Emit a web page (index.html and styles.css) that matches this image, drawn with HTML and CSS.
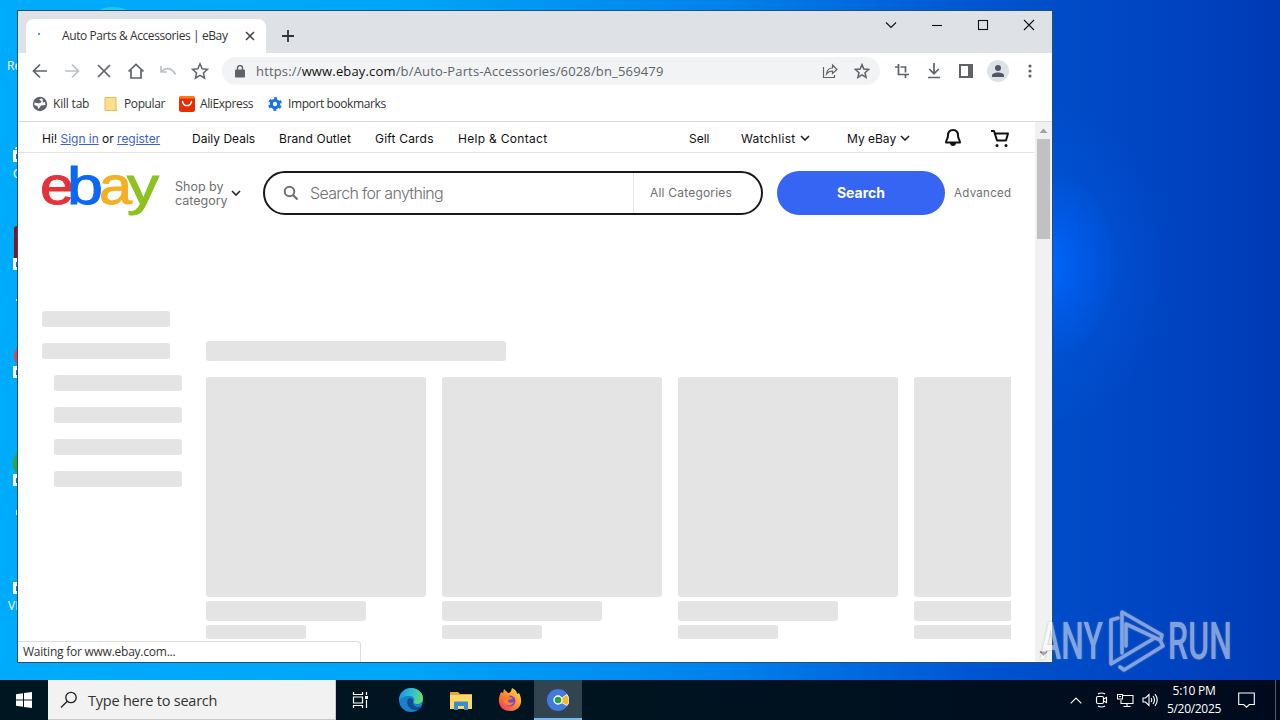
FILE: index.html
```html
<!DOCTYPE html>
<html lang="en">
<head>
  <meta charset="UTF-8" />
  <meta name="viewport" content="width=device-width, initial-scale=1.0" />
  <title>Auto Parts &amp; Accessories | eBay</title>
  <link rel="stylesheet" href="styles.css">
</head>
<body>
  <main class="desktop">
    <!-- desktop shortcuts, mostly hidden by the window -->
    <svg class="shortcuts" width="160" height="680">
      <ellipse cx="113" cy="14" rx="17" ry="7" fill="#26c6e8"/>
      <path d="M15 149h3v-2h-2z" fill="#fff"/>
      <rect x="14" y="226" width="8" height="36" rx="3" fill="#8c1219"/>
      <circle cx="25" cy="356" r="11" fill="#e6404c"/>
      <circle cx="28" cy="463" r="15" fill="#35a33c"/>
      <g fill="#fff">
        <rect x="13" y="150" width="6" height="12"/><rect x="13" y="258" width="6" height="12"/>
        <rect x="13" y="366" width="6" height="12"/><rect x="13" y="474" width="6" height="12"/>
        <rect x="13" y="582" width="6" height="12"/>
      </g>
      <g fill="#1673c4">
        <rect x="16" y="154" width="3" height="5"/><rect x="16" y="262" width="3" height="5"/>
        <rect x="16" y="370" width="3" height="5"/><rect x="16" y="478" width="3" height="5"/>
        <rect x="16" y="586" width="3" height="5"/>
        <rect x="16" y="299" width="2" height="2" fill="#cdefff"/><rect x="16" y="510" width="1" height="5" fill="#cdefff"/>
      </g>
      <g class="shortcut-label"><text x="7" y="70">Re</text><text x="13" y="178">C</text><text x="8" y="610">VL</text></g>
    </svg>

    <section class="window">
      <header class="tabstrip">
        <div class="tab">
          <span class="spinner"></span>
          <span class="tab-title">Auto Parts &amp; Accessories | eBay</span>
          <svg width="10" height="10" viewBox="0 0 10 10"><path d="M1 1l8 8M9 1L1 9" stroke="#444" stroke-width="1.6"/></svg>
        </div>
        <svg class="new-tab" width="12" height="12" viewBox="0 0 12 12"><path d="M6 0v12M0 6h12" stroke="#333" stroke-width="1.8"/></svg>
        <div class="controls">
          <svg width="12" height="12"><path d="M1 3.500l5 5 5-5" class="thin"/></svg>
          <svg width="12" height="12"><path d="M1 6.500h10" class="thin"/></svg>
          <svg width="12" height="12"><rect x="1.500" y="1.500" width="9" height="9" class="thin"/></svg>
          <svg width="12" height="12"><path d="M1 1l10 10M11 1L1 11" class="thin"/></svg>
        </div>
      </header>

      <div class="toolbar">
        <span class="tool"><svg width="16" height="16" class="line"><path d="M15 8H2M8 1.500L1.500 8 8 14.500"/></svg></span>
        <span class="tool off"><svg width="16" height="16" class="line"><path d="M1 8h13M8 1.500L14.500 8 8 14.500"/></svg></span>
        <span class="tool"><svg width="16" height="16" class="line"><path d="M2 2l12 12M14 2L2 14"/></svg></span>
        <span class="tool"><svg width="18" height="16" class="line"><path d="M1.500 8.500L9 1.500l7.500 7M4 7v8h10V7"/></svg></span>
        <span class="tool off"><svg width="18" height="16" class="line"><path d="M2 3v6h6M2.500 8.500c5-5 11-3 14 3"/></svg></span>
        <span class="tool"><svg width="18" height="18" viewBox="0 0 18 18" class="line fine-star"><path d="M9 1.800l2.100 5 5.400.5-4.100 3.600 1.200 5.300L9 13.400l-4.600 2.800 1.200-5.300L1.500 7.300l5.400-.5z"/></svg></span>
        <div class="omnibox">
          <svg width="10" height="13" viewBox="0 0 10 13"><rect y="4.500" width="10" height="8" rx="1" fill="#5f6368"/><path d="M2.500 5V3a2.500 2.500 0 015 0v2" fill="none" stroke="#5f6368" stroke-width="1.400"/></svg>
          <span class="url">https://<b>www.ebay.com</b>/b/Auto-Parts-Accessories/6028/bn_569479</span>
          <svg width="16" height="16" class="line fine"><path d="M1.500 4v10.500h11V12M4.500 11c.5-4 2.500-6 6-6V2l4.500 4.500-4.500 4V8c-3 0-4.500 1-6 3z"/></svg>
          <svg class="bm-star line" width="16" height="16" viewBox="0 0 18 18"><path d="M9 1.800l2.100 5 5.400.5-4.100 3.600 1.200 5.300L9 13.400l-4.600 2.800 1.200-5.300L1.500 7.300l5.400-.5z"/></svg>
        </div>
        <span class="tool"><svg width="14" height="14" class="line"><path d="M0 3h3.500M3.500 0v10.500H14M5.500 3h5v5.500M10.500 10v4"/></svg></span>
        <span class="tool"><svg width="14" height="16" class="line"><path d="M7 0v10.500M2.200 6L7 10.800 11.800 6M1 14.500h12"/></svg></span>
        <span class="tool"><svg width="14" height="14"><rect x="1" y="1" width="12" height="12" fill="none" stroke="#5f6368" stroke-width="2"/><path d="M9 0h5v14H9z" fill="#5f6368"/></svg></span>
        <span class="tool"><svg width="22" height="22"><circle cx="11" cy="11" r="11" fill="#dee1e6"/><circle cx="11" cy="8" r="3" fill="#50566a"/><path d="M5 17v-1.500c0-4 12-4 12 0V17z" fill="#50566a"/></svg></span>
        <span class="tool"><svg width="4" height="14" fill="#5f6368"><circle cx="2" cy="2" r="1.600"/><circle cx="2" cy="7" r="1.600"/><circle cx="2" cy="12" r="1.600"/></svg></span>
      </div>

      <div class="bookmarks">
        <span class="bookmark kill"><svg width="16" height="16"><circle cx="8" cy="8" r="7.200" fill="#5f6368"/><path d="M9 2.500c-2 .5-2 1.500-.5 2s1 2-.5 2.500-3 0-5.500-.5L2.300 9l3.200 1.300L6.500 13l1.500-2 1-1.500L13.500 9 13 6l-2 .5L10.500 3z" fill="#fff"/></svg>Kill tab</span>
        <span class="bookmark popular"><svg width="16" height="16"><path d="M2 1.500h11V12l1 2.500H2z" fill="#ffe08a" stroke="#e6bc55"/></svg>Popular</span>
        <span class="bookmark ali"><svg width="16" height="16"><rect width="16" height="16" rx="2.500" fill="#e62e04"/><path d="M0 2.500A2.500 2.500 0 012.500 0h11A2.500 2.500 0 0116 2.500z" fill="#ff7a1e"/><path d="M3.500 5.500c1 5.500 8 5.500 9 0" fill="none" stroke="#fff" stroke-width="1.400" stroke-linecap="round"/></svg>AliExpress</span>
        <span class="bookmark"><svg width="16" height="16"><circle cx="8" cy="8" r="3.700" fill="none" stroke="#1a73e8" stroke-width="3"/><circle cx="8" cy="8" r="5.800" fill="none" stroke="#1a73e8" stroke-width="2.200" stroke-dasharray="3 3.073" stroke-dashoffset="-1.500"/></svg>Import bookmarks</span>
      </div>

      <div class="viewport">
        <div class="page">
          <nav class="topnav">
            <span class="greet">Hi! <a href="#">Sign in</a> or <a href="#">register</a></span>
            <span class="deals">Daily Deals</span>
            <span class="brand">Brand Outlet</span>
            <span class="gift">Gift Cards</span>
            <span class="help">Help &amp; Contact</span>
            <span class="sell">Sell</span>
            <span class="watch">Watchlist <svg width="10" height="6" class="chev"><path d="M1 1l4 4 4-4"/></svg></span>
            <span class="my">My eBay <svg width="10" height="6" class="chev"><path d="M1 1l4 4 4-4"/></svg></span>
            <svg class="bell" width="18" height="20"><path d="M9 2C5.500 2 4 4.500 4 7.500c0 3.500-2 4.500-2 7h14c0-2.500-2-3.500-2-7C14 4.500 12.500 2 9 2z" fill="none" stroke="#111" stroke-width="2" stroke-linejoin="round"/><path d="M6 15c0 4 6 4 6 0z" fill="#111"/></svg>
            <svg width="20" height="19"><path d="M1 2h3l3 9.500h9L18 4.500H5" fill="none" stroke="#111" stroke-width="2" stroke-linejoin="round"/><circle cx="7" cy="16.500" r="1.500" fill="#111"/><circle cx="16" cy="16.500" r="1.500" fill="#111"/></svg>
          </nav>

          <div class="searchbar">
            <svg class="logo" width="120" height="54">
              <text x="-2" y="38" textLength="34" lengthAdjust="spacingAndGlyphs" fill="#e53238" stroke="#e53238">e</text>
              <text x="25" y="38" textLength="36" lengthAdjust="spacingAndGlyphs" fill="#0968f6" stroke="#0968f6">b</text>
              <text x="57" y="38" textLength="33" lengthAdjust="spacingAndGlyphs" fill="#f5af22" stroke="#f5af22">a</text>
              <text x="85" y="38" textLength="32" lengthAdjust="spacingAndGlyphs" fill="#8dc21f" stroke="#8dc21f">y</text>
            </svg>
            <span class="shop">Shop by<br>category</span>
            <svg width="10" height="6" class="chev shop-chev"><path d="M1 1l4 4 4-4"/></svg>
            <div class="search">
              <svg width="16" height="16"><circle cx="6.500" cy="6.500" r="4.800" fill="none" stroke="#707070" stroke-width="2"/><path d="M10 10l4.500 4.500" stroke="#707070" stroke-width="2.200"/></svg>
              <span class="placeholder">Search for anything</span>
              <span class="cats">All Categories</span>
            </div>
            <span class="go">Search</span>
            <span class="adv">Advanced</span>
          </div>

          <div class="skeleton">
            <div class="side">
              <i></i><i></i><i class="sub"></i><i class="sub"></i><i class="sub"></i><i class="sub"></i>
            </div>
            <div class="feed">
              <i class="heading"></i>
              <div class="cards">
                <div class="card"><i class="pic"></i><i class="name"></i><i class="price"></i></div>
                <div class="card"><i class="pic"></i><i class="name"></i><i class="price"></i></div>
                <div class="card"><i class="pic"></i><i class="name"></i><i class="price"></i></div>
                <div class="card"><i class="pic"></i><i class="name"></i><i class="price"></i></div>
              </div>
            </div>
          </div>
        </div>
        <div class="scrollbar">
          <svg width="17" height="17"><path d="M4.500 11l4-4.500 4 4.500z" fill="#a3a3a3"/></svg>
          <span class="thumb"></span>
          <svg class="down" width="17" height="17"><path d="M4.500 6.500l4 4.500 4-4.500z" fill="#505050"/></svg>
        </div>
      </div>
      <div class="status">Waiting for www.ebay.com...</div>
    </section>

    <svg class="watermark" width="240" height="70">
      <g fill="#fff" font-size="51.500">
        <text x="4" y="53" textLength="63" lengthAdjust="spacingAndGlyphs">ANY</text>
        <text x="132" y="53" textLength="64" lengthAdjust="spacingAndGlyphs">RUN</text>
      </g>
      <path d="M86 47V6L126 29 124.500 35M82 12L75 14V58L117 33M84 61L88 64 127 40 124 34 90 18V40" fill="none" stroke="#fff" stroke-width="3.600" stroke-linejoin="round" stroke-linecap="round"/>
    </svg>
  </main>

  <footer class="taskbar">
    <span class="start"><svg width="16" height="16" fill="#fff"><path d="M0 2.200L7 1.200v6.300H0zM8 1l8-1v7.500H8zM0 8.500h7v6.300l-7-1zM8 8.500h8V16l-8-1z"/></svg></span>
    <div class="tb-search">
      <svg width="18" height="18"><circle cx="11" cy="6.500" r="5.200" fill="none" stroke="#222" stroke-width="1.300"/><path d="M7.300 10.200L1 16.500" stroke="#222" stroke-width="1.300"/></svg>
      <span>Type here to search</span>
    </div>
    <span class="app"><svg width="18" height="16" fill="none" stroke="#fff" stroke-width="1.200"><path d="M1.500 0v2.500h9V0M1.500 16v-2.500h9V16M1.500 5h9v6h-9zM14.500 0v3M14.500 8v8"/><path d="M13 4h3v3h-3z" fill="#fff" stroke="none"/></svg></span>
    <span class="app edge"><svg width="24" height="24">
      <defs><linearGradient id="eg" x1="0" x2="1" y1=".3" y2=".5"><stop stop-color="#1695d8"/><stop offset=".5" stop-color="#31bdd5"/><stop offset="1" stop-color="#62de6c"/></linearGradient></defs>
      <circle cx="12" cy="12" r="12" fill="#1781ce"/>
      <path d="M0 11C1 4 6 0 12 0c7 0 12 5 12 10 0 4-3 6-6 6-3 0-4-1-3-3 1-3-1-5-5-5-5 0-9 2-10 5z" fill="url(#eg)"/>
      <path d="M9 11c-3 5 2 12 9 11 2 0 4-2 5-4-4 2-9 1-9-4 1-3-3-5-5-3z" fill="#134b91"/></svg></span>
    <span class="app"><svg width="22" height="19"><path d="M0 1h8l2 2h12v15H0z" fill="#e7a92f"/><path d="M0 4h22v14H0z" fill="#ffd76b"/><path d="M4 19v-7.500q0-1 1-1h12q1 0 1 1V19h-4v-4H8v4z" fill="#3a8ec9"/></svg></span>
    <span class="app"><svg width="24" height="24">
      <defs><linearGradient id="fg" x1="1" x2="0" y1="0" y2="1"><stop stop-color="#ffe63d"/><stop offset=".45" stop-color="#ff962d"/><stop offset="1" stop-color="#f3256c"/></linearGradient></defs>
      <path d="M3 4l2 1 1-4 4 4c2 0 3-1 4-5 4 2 5 4 5 6l2-1c5 9 1 18-9 18S-2 14 3 4z" fill="url(#fg)"/>
      <circle cx="12" cy="13" r="5.500" fill="#7a45d6"/><path d="M4 8c3-2 6-1 8 1l3 1c-1 2-5 1-5 3s4 2 6 1c-2 5-9 4-10 0z" fill="#ff8126"/></svg></span>
    <span class="app active"><svg width="22" height="22"><circle cx="11" cy="11" r="11" fill="#4479dd"/><path d="M12 8.500h3.500L20 5.500c2.500 4 2.500 8 0 11L15.500 14H12z" fill="#fbb624" stroke="#e8f0ff"/><circle cx="11" cy="11" r="4" fill="#25a04b" stroke="#fff" stroke-width="1.300"/></svg></span>
    <div class="tray">
      <svg width="12" height="7" class="ti"><path d="M.7 6.300L6 1l5.300 5.300"/></svg>
      <svg width="14" height="16" class="ti"><rect x="1.500" y="4.500" width="7" height="7" rx="1.500"/><path d="M8.500 7l3-1.500v5l-3-1.500M3 2q3.500-2 7 0M3 14q3.500 2 7 0"/></svg>
      <svg width="17" height="15" class="ti"><path d="M6 2.500h10v8H4V7M10 10.500v3M6.500 13.500h7M.5 1.500h5V6h-5zM2 3.500h2"/></svg>
      <svg width="17" height="14" class="ti"><path d="M1 5h2.500L7 1.500v11L3.500 9H1zM9 5q1.500 2 0 4M11 3q3 4 0 8M13 1.200q4.500 5.800 0 11.600"/></svg>
      <span class="clock">5:10 PM<br>5/20/2025</span>
      <svg width="17" height="16" class="ti notif"><path d="M.7 1h15.600v11.500h-5L8.500 15.200 5.700 12.500h-5z"/></svg>
      <span class="show-desktop"></span>
    </div>
  </footer>
</body>
</html>
```
FILE: styles.css
```css
body {
  margin: 0;
  width: 1280px;
  height: 720px;
  overflow: hidden;
  display: flex;
  flex-direction: column;
  font-family: 'Open Sans', sans-serif;
  font-size: 12px;
}
svg { display: block; flex: none; }
.desktop {
  position: relative;
  height: 680px;
  background:
    radial-gradient(ellipse 130px 160px at 1045px 265px, #0068ff 0%, rgba(0,100,250,0.65) 25%, rgba(0,92,230,0.25) 60%, rgba(0,80,210,0) 100%),
    linear-gradient(90deg, #00abfc 0, #00a6f9 400px, #0082ec 720px, #0056d2 970px, #004cc8 1060px, #0044c2 1160px, #003ab4 1280px);
}
.shortcuts { position: absolute; left: 0; top: 0; }
.shortcut-label { fill: #fff; font-size: 12px; }

/* browser window */
.window {
  position: absolute;
  left: 17px;
  top: 10px;
  width: 1034px;
  height: 651px;
  border: 1px solid #23506f;
  background: #fff;
  color: #333;
  display: flex;
  flex-direction: column;
}
.tabstrip { display: flex; height: 42px; background: #dee1e6; }
.tab {
  display: flex;
  align-items: center;
  width: 240px;
  height: 34px;
  margin: 8px 0 0 8px;
  padding-left: 12px;
  box-sizing: border-box;
  background: #fff;
  border-radius: 8px 8px 0 0;
}
.spinner { width: 2px; height: 2px; border-radius: 1px; background: #1a73e8; margin-bottom: 4px; }
.tab-title { width: 183px; margin-left: 22px; padding-bottom: 1px; letter-spacing: -0.41px; white-space: nowrap; }
.new-tab { margin: 19px 0 0 16px; }
.controls { display: flex; gap: 34px; margin: 8px 17px 0 auto; }
.thin { fill: none; stroke: #111; stroke-width: 1.1; }

.toolbar { display: flex; align-items: center; height: 36px; padding: 0 6px; }
.tool { width: 32px; display: flex; justify-content: center; }
.line { fill: none; stroke: #5f6368; stroke-width: 1.7; }
.off .line { stroke: #bdc1c6; }
.fine { stroke-width: 1.2; }
.fine-star { stroke-width: 1.5; }
.omnibox {
  display: flex;
  align-items: center;
  width: 658px;
  height: 28px;
  margin: 0 6px;
  padding: 0 10px 0 13px;
  box-sizing: border-box;
  border-radius: 14px;
  background: #f1f3f4;
}
.url { flex: 1; margin-left: 11px; font-size: 13px; letter-spacing: 0.16px; color: #5f6368; }
.url b { font-weight: normal; color: #111; }
.bm-star { margin-left: 16px; }

.bookmarks { display: flex; align-items: center; height: 33px; padding: 0 0 3px 14px; border-bottom: 1px solid #d8dadd; box-sizing: border-box; }
.bookmark { display: flex; align-items: center; gap: 5px; letter-spacing: -0.4px; }
.kill { width: 71px; letter-spacing: -0.2px; }
.popular { width: 76px; }
.ali { width: 88px; }

/* page */
.viewport { display: flex; flex: 1; min-height: 0; }
.page { width: 1017px; overflow: hidden; font-family: Inter, sans-serif; }
.topnav {
  display: flex;
  align-items: center;
  height: 28px;
  padding: 2px 24px 0;
  border-bottom: 1px solid #e5e5e5;
  color: #111;
  white-space: nowrap;
}
.topnav a { color: #3f5fcb; }
.greet { width: 150px; letter-spacing: -0.03px; }
.deals { width: 87px; }
.brand { width: 96px; letter-spacing: 0.08px; }
.gift { width: 83px; letter-spacing: 0.2px; }
.help { width: 231px; letter-spacing: 0.3px; }
.sell { width: 52px; }
.watch { width: 106px; letter-spacing: 0.3px; }
.my { width: 97px; }
.watch, .my { display: flex; align-items: center; gap: 4px; }
.chev { fill: none; stroke: #222; stroke-width: 1.6; }
.bell { margin-right: 28px; }

.searchbar { display: flex; align-items: center; height: 80px; padding: 0 0 0 24px; }
.logo { margin-right: 13px; font-family: 'Liberation Sans', Arial, sans-serif; font-size: 51px; overflow: visible; }
.shop { width: 57px; padding-top: 2px; font-size: 12.5px; line-height: 14px; color: #707070; }
.shop-chev { margin: 0 22px 0 -1px; }
.search {
  display: flex;
  align-items: center;
  width: 500px;
  height: 44px;
  box-sizing: border-box;
  border: 2px solid #191919;
  border-radius: 22px;
  padding-left: 18px;
  color: #707070;
}
.placeholder { width: 323px; margin-left: 11px; font-size: 16px; font-weight: 300; letter-spacing: -0.66px; }
.cats { line-height: 40px; padding-left: 16px; border-left: 1px solid #e5e5e5; letter-spacing: 0.2px; }
.go {
  width: 168px;
  height: 44px;
  margin: 0 9px 0 14px;
  border-radius: 22px;
  background: #3665f3;
  color: #fff;
  font-size: 14px;
  font-weight: bold;
  line-height: 44px;
  text-align: center;
}
.adv { font-size: 11.5px; letter-spacing: 0.3px; color: #707070; }

/* loading placeholders */
.skeleton { display: flex; padding: 78px 24px 0; }
.skeleton i { display: block; background: #e4e4e4; border-radius: 3px; }
.side { display: flex; flex-direction: column; gap: 16px; width: 164px; }
.side i { width: 128px; height: 16px; }
.side .sub { margin-left: 12px; }
.feed { flex: 1; min-width: 0; padding-top: 30px; overflow: hidden; }
.feed .heading { width: 300px; height: 20px; margin-bottom: 16px; }
.cards { display: flex; gap: 16px; }
.card { flex: none; width: 220px; }
.pic { height: 220px; }
.name { width: 160px; height: 20px; margin: 4px 0; }
.price { width: 100px; height: 14px; }

.scrollbar { display: flex; flex-direction: column; width: 17px; background: #f1f1f1; }
.thumb { width: 13px; height: 100px; margin-left: 2px; background: #c1c1c1; }
.down { margin-top: auto; }
.status {
  position: absolute;
  left: 0;
  bottom: 0;
  width: 337px;
  height: 20px;
  padding-left: 5px;
  line-height: 20px;
  letter-spacing: -0.24px;
  background: #fff;
  border: 1px solid #dcdcdc;
  border-width: 1px 1px 0 0;
  border-radius: 0 4px 0 0;
}
.watermark {
  position: absolute;
  left: 1036px;
  top: 606px;
  opacity: 0.5;
  font-family: Roboto, sans-serif;
  font-weight: 500;
  filter: drop-shadow(0 0 1px #888);
}

/* taskbar */
.taskbar { display: flex; height: 40px; background: linear-gradient(90deg, #001722, #001420 50%, #000a1e); color: #fff; }
.start, .app { display: flex; align-items: center; justify-content: center; width: 48px; }
.tb-search {
  display: flex;
  align-items: center;
  gap: 10px;
  width: 288px;
  padding-left: 12px;
  box-sizing: border-box;
  background: #f2f2f2;
  border: 1px solid #c9c9c9;
  border-width: 0 1px 1px 0;
  color: #333;
  font-size: 14.5px;
  letter-spacing: -0.22px;
}
.tb-search span { padding-top: 2px; }
.app { width: 49px; box-sizing: border-box; }
.edge { width: 51px; }
.active { width: 48px; padding-top: 2px; background: #32444f; border-bottom: 2px solid #76b9ed; }
.tray { display: flex; align-items: center; margin-left: auto; }
.ti { fill: none; stroke: #fff; stroke-width: 1.1; margin-right: 8px; }
.tray .ti:nth-child(1) { margin-right: 13px; }
.clock { width: 72px; margin-left: -9px; text-align: center; line-height: 18px; letter-spacing: -0.3px; }
.tray .notif { margin: 0 20px 0 8px; }
.show-desktop { width: 4px; height: 40px; border-left: 1px solid #555d6b; }
```
